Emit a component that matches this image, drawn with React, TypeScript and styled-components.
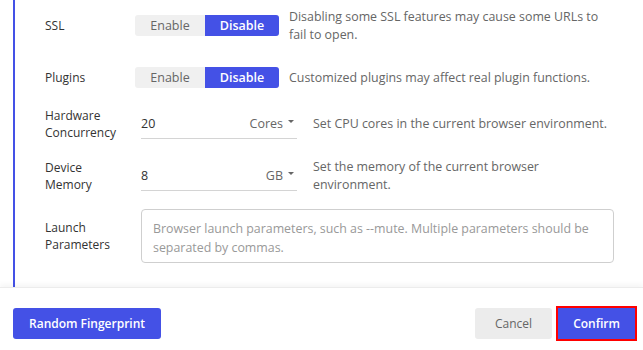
import React from "react";
import styled, { createGlobalStyle } from "styled-components";

const Global = createGlobalStyle`
  html, body {
    margin: 0;
    padding: 0;
    background: #ffffff;
  }
  body {
    font-family: "Open Sans", "Noto Sans", sans-serif;
    font-size: 12px;
    color: #333333;
  }
`;

const Page = styled.div`
  width: 643px;
  height: 350px;
  display: flex;
  flex-direction: column;
  overflow: hidden;
`;

const Body = styled.div`
  height: 287px;
  padding-left: 13px;
  box-sizing: border-box;
`;

const Panel = styled.div`
  height: 100%;
  border-left: 2px solid #4451e6;
  padding: 8px 0 0 30px;
  box-sizing: border-box;
  display: flex;
  flex-direction: column;
`;

const Row = styled.div<{ gap: number }>`
  display: grid;
  grid-template-columns: 90px auto 1fr;
  align-items: center;
  min-height: 35px;
  margin-top: ${p => p.gap}px;
  &:first-child {
    margin-top: 0;
  }
`;

const Label = styled.div`
  font-size: 12px;
  line-height: 17px;
  color: #333333;
`;

const Hint = styled.div<{ wide?: boolean }>`
  font-size: 12.4px;
  line-height: 17.5px;
  color: #666666;
  padding-left: ${p => (p.wide ? 16 : 10)}px;
  padding-right: 36px;
`;

const Segmented = styled.div`
  display: flex;
  height: 21px;
  border-radius: 3px;
  overflow: hidden;
  background: #f0f0f0;
`;

const Segment = styled.div<{ active?: boolean }>`
  width: ${p => (p.active ? 74 : 70)}px;
  display: flex;
  align-items: center;
  justify-content: center;
  font-size: 12.5px;
  font-weight: ${p => (p.active ? 600 : 400)};
  color: ${p => (p.active ? "#ffffff" : "#666666")};
  background: ${p => (p.active ? "#4451e6" : "transparent")};
`;

const Field = styled.div`
  margin-left: 6px;
  width: 156px;
  height: 30px;
  border-bottom: 1px solid #d4d4d4;
  display: flex;
  align-items: center;
  justify-content: space-between;
  box-sizing: border-box;
  font-size: 12.5px;
  color: #333333;
`;

const Unit = styled.span`
  color: #666666;
  display: flex;
  align-items: center;
  gap: 5px;
  padding-right: 3px;
`;

const Caret = styled.span`
  width: 0;
  height: 0;
  border-left: 3px solid transparent;
  border-right: 3px solid transparent;
  border-top: 3px solid #666666;
  margin-top: -3px;
`;

const TextArea = styled.div`
  grid-column: 2 / 4;
  margin-left: 6px;
  width: 473px;
  height: 54px;
  box-sizing: border-box;
  border: 1px solid #cfcfcf;
  border-radius: 4px;
  padding: 9px 11px;
  font-size: 12.4px;
  line-height: 19px;
  color: #999999;
`;

const Footer = styled.div`
  flex: 1;
  border-top: 1px solid #ececec;
  box-shadow: 0 -3px 5px rgba(0, 0, 0, 0.04);
  display: flex;
  align-items: flex-start;
  justify-content: space-between;
  padding: 20px 6px 0 13px;
`;

const Actions = styled.div`
  display: flex;
  gap: 4px;
`;

const Button = styled.button<{ variant: "primary" | "ghost"; focused?: boolean }>`
  height: ${p => (p.focused ? 35 : 31)}px;
  margin-top: ${p => (p.focused ? -2 : 0)}px;
  padding: 0 ${p => (p.focused ? 15 : p.variant === "ghost" ? 20 : 16)}px;
  border: ${p => (p.focused ? "2px solid #ff0000" : "none")};
  border-radius: ${p => (p.focused ? 0 : 3)}px;
  box-shadow: ${p => (p.focused ? "inset 0 0 0 1px #4451e6" : "none")};
  background: ${p => (p.variant === "primary" ? "#4451e6" : "#ececec")};
  color: ${p => (p.variant === "primary" ? "#ffffff" : "#666666")};
  font-family: inherit;
  font-size: 12px;
  font-weight: ${p => (p.variant === "primary" ? 600 : 400)};
  cursor: pointer;
`;

export default function App() {
  return (
    <Page>
      <Global />
      <Body>
        <Panel>
          <Row gap={0}>
            <Label>SSL</Label>
            <Segmented>
              <Segment>Enable</Segment>
              <Segment active>Disable</Segment>
            </Segmented>
            <Hint>Disabling some SSL features may cause some URLs to fail to open.</Hint>
          </Row>
          <Row gap={17}>
            <Label>Plugins</Label>
            <Segmented>
              <Segment>Enable</Segment>
              <Segment active>Disable</Segment>
            </Segmented>
            <Hint>Customized plugins may affect real plugin functions.</Hint>
          </Row>
          <Row gap={11}>
            <Label>
              Hardware
              <br />
              Concurrency
            </Label>
            <Field>
              <span>20</span>
              <Unit>
                Cores <Caret />
              </Unit>
            </Field>
            <Hint wide>Set CPU cores in the current browser environment.</Hint>
          </Row>
          <Row gap={17}>
            <Label>
              Device
              <br />
              Memory
            </Label>
            <Field>
              <span>8</span>
              <Unit>
                GB <Caret />
              </Unit>
            </Field>
            <Hint wide>Set the memory of the current browser environment.</Hint>
          </Row>
          <Row gap={16}>
            <Label>
              Launch
              <br />
              Parameters
            </Label>
            <TextArea>
              Browser launch parameters, such as --mute. Multiple parameters should be separated by commas.
            </TextArea>
          </Row>
        </Panel>
      </Body>
      <Footer>
        <Button variant="primary">Random Fingerprint</Button>
        <Actions>
          <Button variant="ghost">Cancel</Button>
          <Button variant="primary" focused>
            Confirm
          </Button>
        </Actions>
      </Footer>
    </Page>
  );
}
